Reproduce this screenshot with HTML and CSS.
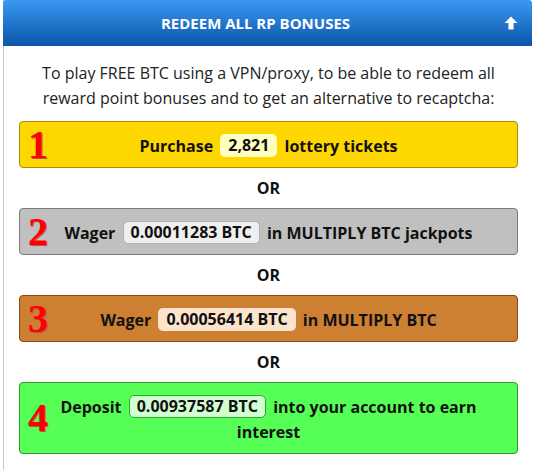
FILE: index.html
```html
<!DOCTYPE html>
<html lang="en">
  <head>
    <meta charset="UTF-8" />
    <title>Redeem all RP bonuses</title>
    <link rel="stylesheet" href="styles.css">
  </head>
  <body>
    <div class="panel">
      <div class="panel-head">
        <span class="panel-title">REDEEM ALL RP BONUSES</span>
        <svg class="toggle" width="14" height="14" viewBox="0 0 14 14">
          <path d="M7 0.5 L13.5 7 L9.6 7 L9.6 13.5 L4.4 13.5 L4.4 7 L0.5 7 Z" fill="#fff" />
        </svg>
      </div>
      <div class="panel-body">
        <p class="intro">To play FREE BTC using a VPN/proxy, to be able to redeem all reward point bonuses and to get an alternative to recaptcha:</p>

        <div class="option gold">
          <span class="num">1</span>
          Purchase <span class="pill">2,821</span> lottery tickets
        </div>
        <p class="or">OR</p>
        <div class="option silver">
          <span class="num">2</span>
          Wager <span class="pill">0.00011283 BTC</span> in MULTIPLY BTC jackpots
        </div>
        <p class="or">OR</p>
        <div class="option bronze">
          <span class="num">3</span>
          Wager <span class="pill">0.00056414 BTC</span> in MULTIPLY BTC
        </div>
        <p class="or">OR</p>
        <div class="option green">
          <span class="num">4</span>
          Deposit <span class="pill">0.00937587 BTC</span> into your account to earn interest
        </div>
      </div>
    </div>
  </body>
</html>
```

FILE: styles.css
```css
body {
  margin: 0;
  background: #fff;
  font-family: 'Open Sans', 'Noto Sans', sans-serif;
  color: #111;
}
.panel {
  margin-left: 3px;
  width: 529px;
  border-left: 1px solid #c8c8c8;
  box-sizing: border-box;
}
.panel-head {
  position: relative;
  height: 46px;
  margin-left: -1px;
  display: flex;
  align-items: center;
  justify-content: center;
  background: linear-gradient(to bottom, #3b98f2, #0a55a8);
  border-top-left-radius: 3px;
  border-top-right-radius: 3px;
}
.panel-title {
  color: #fff;
  font-weight: bold;
  font-size: 15px;
  margin-left: -24px;
}
.toggle {
  position: absolute;
  right: 14px;
  top: 16px;
}
.panel-body {
  padding: 15px 14px 16px 15px;
}
.intro {
  margin: 0 0 10px;
  font-size: 16px;
  line-height: 25px;
  text-align: center;
  color: #222;
}
.option {
  position: relative;
  padding: 12px 40px 8px;
  border: 1px solid;
  border-radius: 4px;
  font-weight: bold;
  font-size: 16px;
  line-height: 25px;
  text-align: center;
}
.num {
  position: absolute;
  left: 8px;
  top: 50%;
  transform: translateY(-50%);
  font-family: 'Liberation Serif', serif;
  font-weight: bold;
  font-size: 40px;
  line-height: 40px;
  color: #f00;
  text-shadow: 1px 1px 0 #c05050;
}
.pill {
  display: inline-block;
  padding: 0 7px;
  margin: 0 3px;
  line-height: 21px;
  border-radius: 5px;
  border: 1px solid transparent;
  vertical-align: 1px;
}
.or {
  margin: 8px 0;
  font-weight: bold;
  font-size: 16px;
  line-height: 24px;
  text-align: center;
}
.gold {
  margin-top: 1px;
  background: #ffd700;
  border-color: #a88a10;
}
.gold .pill {
  background: #ffffc2;
}
.silver {
  background: #c0c0c0;
  border-color: #7a7a7a;
}
.silver .pill {
  background: #efefef;
  border-color: #b0b0b0;
}
.bronze {
  background: #cd7f32;
  border-color: #8a4a14;
}
.bronze .pill {
  background: #fbe3cc;
}
.green {
  background: #55ff55;
  border-color: #2a9a2a;
}
.green .pill {
  background: #d2ffd2;
  border-color: #2fa82f;
}
```
